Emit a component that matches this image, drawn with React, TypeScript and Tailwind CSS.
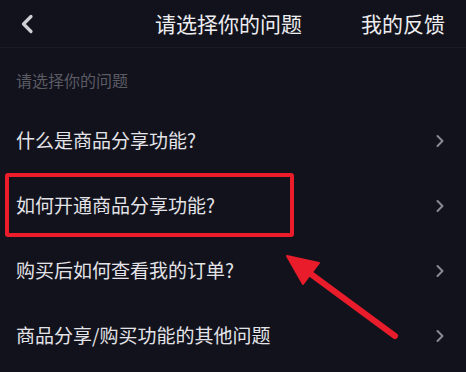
import React from "react"

const questions = [
  "什么是商品分享功能?",
  "如何开通商品分享功能?",
  "购买后如何查看我的订单?",
  "商品分享/购买功能的其他问题",
]

function Chevron() {
  return (
    <svg width="10" height="14" viewBox="0 0 10 14" fill="none">
      <path d="M2.5 2 L7.5 7 L2.5 12" stroke="#8a8a92" strokeWidth="2" strokeLinecap="round" strokeLinejoin="round" />
    </svg>
  )
}

export default function App() {
  return (
    <div
      className="relative w-[466px] h-[372px] overflow-hidden bg-[#12121c]"
      style={{ fontFamily: '"Noto Sans CJK SC", "Noto Sans", sans-serif' }}
    >
      {/* Header */}
      <div className="flex h-[48px] items-center border-b border-[#1b1b26] pl-[20px] pr-[21px]">
        <svg width="14" height="20" viewBox="0 0 14 20" fill="none">
          <path d="M11 2.5 L3.5 10 L11 17.5" stroke="#cfcfd4" strokeWidth="3.2" strokeLinecap="round" strokeLinejoin="round" />
        </svg>
        <span className="ml-[121px] text-[21px] leading-none text-[#ededf0]">请选择你的问题</span>
        <span className="ml-auto text-[21px] leading-none text-[#ededf0]">我的反馈</span>
      </div>

      {/* Section label */}
      <div className="flex h-[60px] items-center pl-[16px] pt-[4px] text-[16px] text-[#5b5b64]">
        请选择你的问题
      </div>

      {/* Rows */}
      {questions.map((q, i) => (
        <div key={q} className="relative flex h-[65px] items-center pl-[16px] pr-[21px]">
          <span className="text-[19px] text-[#e4e4e8]">{q}</span>
          <span className="ml-auto">
            <Chevron />
          </span>
          {i === 1 && (
            <div className="absolute left-[5px] top-0 h-[64px] w-[289px] rounded-[3px] border-[4px] border-[#ec1c2a]" />
          )}
        </div>
      ))}

      {/* Annotation arrow */}
      <svg className="pointer-events-none absolute left-0 top-0" width="466" height="372" viewBox="0 0 466 372">
        <line x1="395" y1="336" x2="300" y2="266" stroke="#e81c2a" strokeWidth="6" strokeLinecap="round" />
        <polygon points="287,256 319,263 303,284" fill="#e81c2a" stroke="#e81c2a" strokeWidth="2" strokeLinejoin="round" />
      </svg>
    </div>
  )
}
